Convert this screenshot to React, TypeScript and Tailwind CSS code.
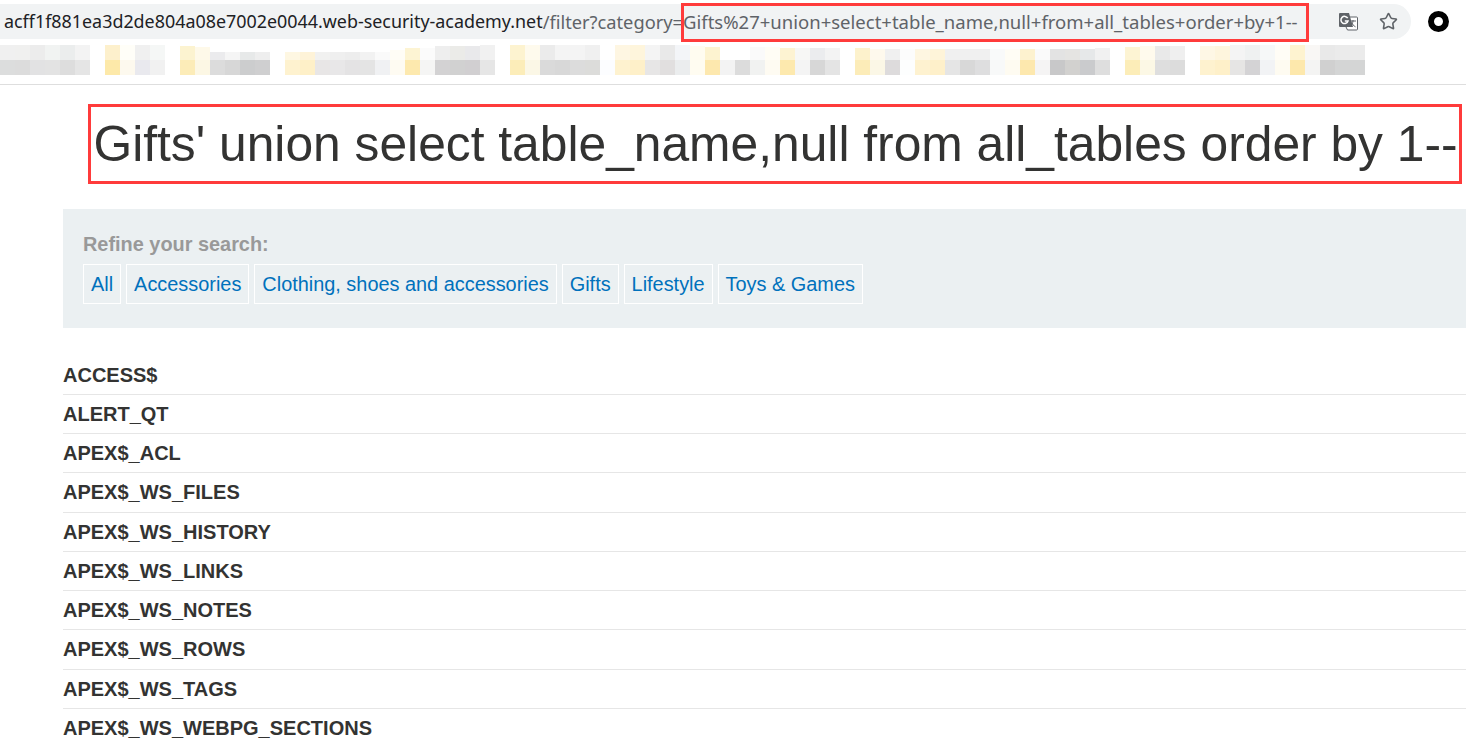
import { Star } from "lucide-react";

const ROWS = ["ACCESS$","ALERT_QT","APEX$_ACL","APEX$_WS_FILES","APEX$_WS_HISTORY","APEX$_WS_LINKS","APEX$_WS_NOTES","APEX$_WS_ROWS","APEX$_WS_TAGS","APEX$_WS_WEBPG_SECTIONS"];
const CATS = ["All","Accessories","Clothing, shoes and accessories","Gifts","Lifestyle","Toys & Games"];

// top colour, bottom colour, height of the top cell
const W = "#ffffff";
const CELLS: [string, string, number][] = [
  ["#f0f0f0","#dcdddd",15],["#f0f0ef","#dcdcdc",15],["#ececec","#e2e2e3",15],["#f1f3f2","#e3e3e3",15],["#ebeded","#dddddd",15],["#f3f3f3","#e5e5e5",15],[W,W,15],
  ["#fdf0cc","#fde9a9",15],["#fffef8","#fdf9ee",15],["#f0f0f0","#e9e9ee",15],["#f5f7f6","#f1f1f1",15],[W,W,15],
  ["#fcf3d0","#fcecb8",14],["#fef9e9","#fcf7e4",13],["#ebebed","#dcdcdc",8],["#f5f5f5","#d7d7d7",8],["#e7e9e9","#cccdce",8],["#eeeeee","#cfcfd0",8],[W,W,15],
  ["#fef7e2","#fef2cf",8],["#fef3d8","#fef0c8",8],["#f1f1f0","#e8e6e6",8],["#efefef","#e8e7e8",8],["#ededed","#e4e3e4",8],["#f2f2f2","#e4e4e4",8],["#fafafa","#f0f1f3",8],
  ["#fffdf6","#fefbf2",10],["#fdf4d3","#fde9ae",12],["#fbfbfb","#f5f5f4",12],["#eeeeee","#d3d2d3",14],["#ebebe8","#d1d1d1",14],["#e9e9eb","#d1cfd1",14],["#f1f1f1","#e6e6e6",15],[W,W,15],
  ["#fdf3d0","#fcedb9",15],["#fefaed","#fbf7e6",15],["#ebebeb","#dadada",15],["#f4f4f4","#d8d8d8",15],["#f4f4f4","#dcdcdc",15],["#f0f0f0","#dcdcda",15],[W,"#fcfdff",15],
  ["#fef6e2","#fef2cf",15],["#fef5dc","#fef0c9",15],["#f4f4f4","#e7e6e6",15],["#e9e9e9","#e1dfdf",15],["#f3f5f8","#ebedee",15],["#fffcf0","#fffcf1",14],["#fdf3d0","#fde8ae",13],
  [W,"#f3f3f3",8],[W,"#dcdcdc",8],["#fafafa","#f1f2f1",13],["#fffdf5","#fefbf2",13],["#fdf3d2","#fde9ae",12],["#f7f7f5","#f4f4f4",12],["#ebecee","#d7d7d7",12],["#f3f3f3","#e4e4e4",12],[W,W,15],
  ["#fdf2cc","#fcecb8",12],["#fef9ed","#fbf7e6",11],["#f0f0f0","#dddbdc",11],["#fcfcfc","#fdfefe",11],["#fef6e1","#fef2d0",11],["#fef4d9","#fef0ca",11],["#f0f0f0","#e5e5e5",11],["#f0f0f0","#d8d8d8",11],["#f0f0f0","#dededf",11],["#f9fafa","#f8f9f9",11],["#fffdf5","#fefbf1",11],
  ["#fdf2cf","#fde8ae",11],["#fafafa","#f5f4f4",11],["#e3e3e3","#c8c8c9",11],["#e5e4e2","#d2d1cf",11],["#e6e8e9","#cacbcd",11],["#f1f1f1","#dedede",12],[W,W,15],
  ["#fdf4d3","#fcedb8",13],["#fffaed","#fcf8e5",14],["#e9e9e9","#dedede",14],["#efefef","#dcdcdc",14],[W,W,15],
  ["#fef7e5","#fef2cf",14],["#fef5dd","#fef0c9",14],["#f4f4f4","#e6e5e4",15],["#eff1f1","#d4d3d5",15],["#f6f8f8","#f2f3f5",15],["#fffdf6","#fefbf1",15],["#fef3d0","#fde8ac",15],["#f9f7f5","#f4f4f3",15],["#e9e9e9","#d0d0d0",15],["#ebebeb","#d4d5d5",15],["#ebebeb","#d4d5d5",15],
];

function TranslateIcon() {
  return (
    <svg width="20" height="20" viewBox="0 0 20 20" className="shrink-0">
      <path d="M8 5h10.5a1 1 0 0 1 1 1v11a1 1 0 0 1-1 1H9.5L8 15z" fill="#fff" stroke="#5f6368" strokeWidth="1" />
      <path d="M2 1h9l4 14H2a1 1 0 0 1-1-1V2a1 1 0 0 1 1-1z" fill="#5f6368" />
      <path d="M9.7 6.2A3.6 3.6 0 1 0 10 9H6.8" fill="none" stroke="#fff" strokeWidth="1.5" />
      <path d="M12 9h6M15 8v1c-.3 2.500-1.500 4.300-3 5.500M13.500 10.500c.7 1.700 2.200 3.300 4 4.300" fill="none" stroke="#5f6368" strokeWidth="1" />
    </svg>
  );
}

export default function App() {
  return (
    <div className="h-[745px] overflow-hidden bg-white font-['Liberation_Sans',sans-serif] text-[#333332]">
      <header className="relative h-[85px] border-b border-[#dedede]">
        <div className="flex h-[45px] items-start pt-1">
          <div className="flex h-[35px] w-[1411px] items-center rounded-r-[18px] bg-[#f1f3f4] pl-[4px] font-['Noto_Sans',sans-serif] whitespace-nowrap">
            <span className="text-[17.9px] text-[#202124]">acff1f881ea3d2de804a08e7002e0044.web-security-academy.net</span>
            <span className="text-[18.27px] text-[#5f6368]">/filter?category=</span>
            <span className="text-[18.52px] text-[#5f6368]">Gifts%27+union+select+table_name,null+from+all_tables+order+by+1--</span>
            <span className="ml-auto flex items-center gap-[21px] pr-[13px]">
              <TranslateIcon />
              <Star size={19} strokeWidth={2} color="#5f6368" />
            </span>
          </div>
          <span className="ml-[17px] mt-[7px] h-[21px] w-[21px] rounded-full border-[6px] border-black" />
        </div>
        <div className="flex">
          {CELLS.map(([top, bottom, h], i) => (
            <div key={i} className="flex h-[30px] w-[15px] shrink-0 flex-col justify-end">
              <div style={{ height: h, backgroundColor: top }} />
              <div className="h-[15px]" style={{ backgroundColor: bottom }} />
            </div>
          ))}
        </div>
        <div className="absolute top-[3px] left-[681px] h-[39px] w-[628px] border-[3px] border-[#ff3b3b]" />
      </header>
      <main className="pl-[63px]">
        <div className="relative">
          <h1 className="ml-[30.500px] mt-[29px] text-[49.74px] leading-[60px] whitespace-nowrap">Gifts' union select table_name,null from all_tables order by 1--</h1>
          <div className="absolute top-[-10px] left-[25px] h-[80px] w-[1374px] border-[3px] border-[#ff3b3b]" />
        </div>
        <section className="mt-[35px] h-[119px] bg-[#ebf0f2] pl-5 pt-6">
          <div className="text-[19.9px] leading-[22px] font-bold text-[#999]">Refine your search:</div>
          <div className="mt-[9px] flex gap-[5px]">
            {CATS.map((c) => (
              <a key={c} className="border border-white px-[7px] text-[19.9px] leading-[38px] text-[#0071bc]">{c}</a>
            ))}
          </div>
        </section>
        <ul className="mt-[27.8px]">
          {ROWS.map((r) => (
            <li key={r} className="h-[39.22px] border-b border-[#e6e6e6] text-[20px] leading-[39px] font-bold">{r}</li>
          ))}
        </ul>
      </main>
    </div>
  );
}
